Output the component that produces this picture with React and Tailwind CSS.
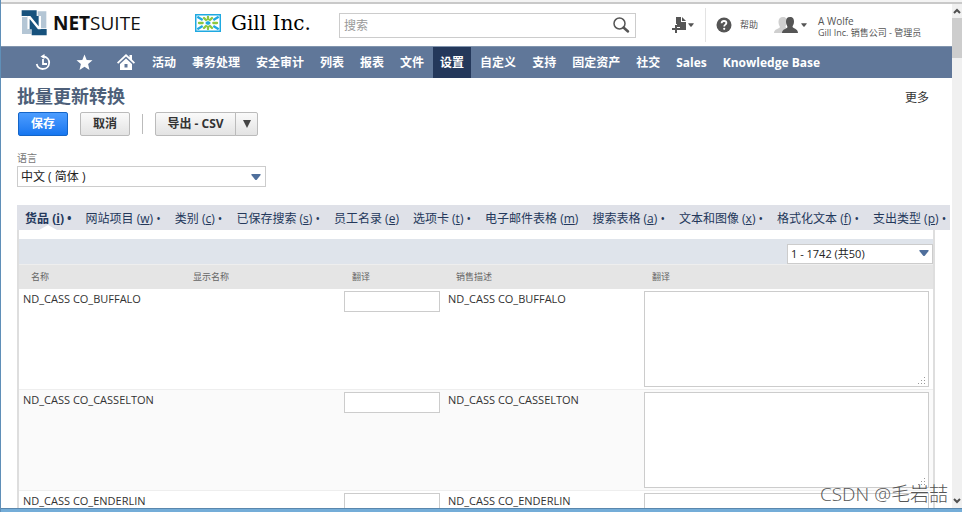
import { useState } from "react";

const navItems = [
  "活动",
  "事务处理",
  "安全审计",
  "列表",
  "报表",
  "文件",
  "设置",
  "自定义",
  "支持",
  "固定资产",
  "社交",
  "Sales",
  "Knowledge Base",
];

const tabs = [
  { label: "货品", hotkey: "i", dot: true },
  { label: "网站项目", hotkey: "w", dot: true },
  { label: "类别", hotkey: "c", dot: true },
  { label: "已保存搜索", hotkey: "s", dot: true },
  { label: "员工名录", hotkey: "e", dot: false },
  { label: "选项卡", hotkey: "t", dot: true },
  { label: "电子邮件表格", hotkey: "m", dot: false },
  { label: "搜索表格", hotkey: "a", dot: true },
  { label: "文本和图像", hotkey: "x", dot: true },
  { label: "格式化文本", hotkey: "f", dot: true },
  { label: "支出类型", hotkey: "p", dot: true },
];

const rows = ["ND_CASS CO_BUFFALO", "ND_CASS CO_CASSELTON", "ND_CASS CO_ENDERLIN"];

function Caret({ className }) {
  return (
    <svg viewBox="0 0 10 6" className={className} fill="currentColor" aria-hidden="true">
      <path d="M1 0h8q1 0 .6 1L6 5.4q-1 1-2 0L.4 1Q0 0 1 0Z" />
    </svg>
  );
}

function NetSuiteLogo() {
  return (
    <a href="#home" aria-label="NetSuite" className="flex items-center">
      <svg viewBox="0 0 78 78" className="h-[26px] w-[26px]">
        <path d="M3 21h16v37h12v14H3Z" fill="#b4c6d5" />
        <path d="M50 4h26v51H60V18H50Z" fill="#b4c6d5" />
        <path d="M2 1h45v17h8v39h22v19H32V58H20V18H2Z" fill="#17527d" />
        <path d="M19 18h9l25 31V18h6v40h-8L26 27v31h-7Z" fill="#fff" />
      </svg>
      <span className="ml-1.5 whitespace-nowrap text-[19px] leading-6 text-[#111]">
        <b>NET</b>SUITE
      </span>
    </a>
  );
}

function GillLogo() {
  return (
    <svg viewBox="0 0 78 54" className="h-[18px] w-[26px] shrink-0">
      <rect x="2" y="2" width="74" height="50" fill="#fff" stroke="#1fa9e1" strokeWidth="5" />
      <g stroke="#1fa9e1" strokeWidth="7">
        <path d="M7 8l16 10M71 8l-16 10M7 46l16-10M71 46l-16-10M32 27h14M39 22v10" />
      </g>
      <g stroke="#8cc63f" strokeWidth="7" strokeLinecap="round">
        <path d="M39 9v7M39 38v7M12 27h11M55 27h11M27 12l6 6M51 12l-6 6M27 42l6-6M51 42l-6-6" />
      </g>
    </svg>
  );
}

function TopHeader() {
  return (
    <header className="flex h-[42px] shrink-0 items-center bg-white pl-5">
      <div className="w-[174px] shrink-0 pb-1">
        <NetSuiteLogo />
      </div>
      <div className="flex w-[144px] shrink-0 items-center pb-1">
        <GillLogo />
        <span className="ml-2.5 whitespace-nowrap font-['DejaVu_Serif',serif] text-[20px] leading-6 text-black">
          Gill Inc.
        </span>
      </div>
      <form className="flex h-[25px] max-w-[297px] flex-1 items-center border border-[#ccc] bg-white">
        <input
          type="search"
          aria-label="搜索"
          placeholder="搜索"
          className="h-full min-w-0 flex-1 px-1 text-xs outline-none placeholder:text-[#999]"
        />
        <button type="button" aria-label="搜索" className="px-[5px]">
          <svg viewBox="0 0 18 18" className="h-[18px] w-[18px]" fill="none" stroke="#555">
            <circle cx="7.5" cy="7.5" r="5.5" strokeWidth="1.5" />
            <path d="M11.5 11.5l4.5 4" strokeWidth="2.5" strokeLinecap="round" />
          </svg>
        </button>
      </form>
      <button type="button" aria-label="新建" className="ml-9 flex items-center text-[#555]">
        <svg viewBox="0 0 16 18" className="h-[18px] w-4" fill="currentColor">
          <path d="M4 1h5v5h5v8H8v-3H5V8H4Z" />
          <path d="M10 1l4 4h-4Z" />
          <path d="M3 9h2v3h3v2H5v3H3v-3H0v-2h3Z" />
        </svg>
        <Caret className="h-1 w-1.5" />
      </button>
      <div className="ml-[11px] h-[34px] border-l border-[#e3e3e3]" />
      <button type="button" className="ml-2.5 flex items-center gap-2 text-[9px] leading-4 text-[#555]">
        <svg viewBox="0 0 16 16" className="h-4 w-4">
          <circle cx="8" cy="8" r="7.5" fill="#555" />
          <path
            d="M5.6 6.2C5.7 4.7 6.6 4 8 4s2.4.8 2.4 2.1C10.4 7.6 8.2 7.7 8.2 9.4"
            fill="none"
            stroke="#fff"
            strokeWidth="1.8"
          />
          <circle cx="8.2" cy="11.8" r="1.1" fill="#fff" />
        </svg>
        帮助
      </button>
      <button type="button" aria-label="角色" className="ml-4 flex items-center gap-[3px] text-[#555]">
        <svg viewBox="0 0 24 18" className="h-[18px] w-6">
          <path
            d="M9 1c3 0 4 2 4 4.500s-1 3.500-1.500 5c0 2 5 2 5 6.500H0c0-4 5-4 6-6C5 9 4.500 8 4.500 5.500S6 1 9 1Z"
            fill="#cfcfcf"
          />
          <path
            d="M16 1c3 0 4 2 4 4.500s-1 3.500-1.500 5c0 2 5.500 2 5.500 6.500H8c0-4 5-4 5.500-6C13 9 12 8 12 5.500S13 1 16 1Z"
            fill="#555"
          />
        </svg>
        <Caret className="h-1 w-1.5" />
      </button>
      <div className="ml-[11px] whitespace-nowrap pt-1 text-[#555]">
        <div className="text-[10px] leading-[11px]">A Wolfe</div>
        <div className="text-[9px] leading-[11px]">Gill Inc. 销售公司 - 管理员</div>
      </div>
    </header>
  );
}

function NavBar() {
  return (
    <nav className="flex h-8 shrink-0 items-stretch gap-0.5 whitespace-nowrap border-t border-[#8295ae] bg-[#607799] pl-[34px] text-xs font-bold text-white">
      <div className="mr-2 flex items-center gap-6">
        <a href="#recent" aria-label="最近记录">
          <svg viewBox="0 0 17 17" className="h-[17px] w-[17px]" fill="none" stroke="#fff" strokeWidth="1.8">
            <path d="M9 2.500a6.300 6.300 0 1 1-7.300 7.500" />
            <path d="M8 5v5h4" />
            <path d="M9.500 0v5L5.500 2.500Z" fill="#fff" stroke="none" />
          </svg>
        </a>
        <a href="#shortcuts" aria-label="快捷方式">
          <svg viewBox="0 0 17 17" className="h-[17px] w-[17px]" fill="#fff">
            <path d="M8.500 .5l2.200 5.400 5.800.4-4.400 3.800 1.400 5.900-5-3.200-5 3.200 1.400-5.900L.5 6.300l5.800-.4Z" />
          </svg>
        </a>
        <a href="#home" aria-label="主页">
          <svg viewBox="0 0 18 17" className="h-[17px] w-[18px]" fill="#fff">
            <path d="M9 0l3.500 3.300V1H15v4.500l3 3-1.200 1.200L9 2.500 1.200 9.700 0 8.500Z" />
            <path d="M9 4.500l6 5.500v6H3v-6Zm-1.500 5.500v3.500h3V10Z" fillRule="evenodd" />
          </svg>
        </a>
      </div>
      {navItems.map((item) => (
        <a
          key={item}
          href="#nav"
          className={`flex items-center px-[7px] ${item === "设置" ? "bg-[#24385b]" : ""}`}
        >
          {item}
        </a>
      ))}
    </nav>
  );
}

function PageTitle() {
  const buttonClass =
    "h-6 border border-[#bbb] bg-linear-to-b from-[#fafafa] to-[#e3e3e3] text-xs font-bold text-[#333]";

  return (
    <div className="px-4 pt-2">
      <div className="flex items-center justify-between pr-[7px]">
        <h1 className="text-[18px] font-bold leading-5 text-[#4d5f79]">批量更新转换</h1>
        <a href="#more" className="pt-1 text-xs leading-4 text-[#333]">
          更多
        </a>
      </div>
      <div className="mt-1.5 flex items-center pl-px">
        <button
          type="button"
          className="h-6 w-[50px] rounded-xs border border-[#1465c8] bg-linear-to-b from-[#4c9dff] to-[#1576f0] text-xs font-bold text-white"
        >
          保存
        </button>
        <button type="button" className={`${buttonClass} ml-3 w-[50px] rounded-xs`}>
          取消
        </button>
        <div className="mx-3 h-5 border-l border-[#bbb]" />
        <button type="button" className={`${buttonClass} w-[81px] rounded-l-xs`}>
          导出 - CSV
        </button>
        <button
          type="button"
          aria-label="更多导出选项"
          className={`${buttonClass} -ml-px flex w-[23px] items-center justify-center rounded-r-xs`}
        >
          <svg viewBox="0 0 8 8" className="h-2 w-2" fill="#444">
            <path d="M0 0h8L4 8Z" />
          </svg>
        </button>
      </div>
      <div className="mt-3.5 w-[249px]">
        <label htmlFor="language" className="block text-[10px] leading-4 text-[#777]">
          语言
        </label>
        <div className="relative">
          <select
            id="language"
            className="block h-[21px] w-full appearance-none border border-[#ccc] bg-white px-[3px] text-xs leading-4 text-[#222] outline-none"
          >
            <option>中文 ( 简体 )</option>
          </select>
          <Caret className="pointer-events-none absolute right-[5px] top-2 h-1.5 w-2.5 text-[#4f6f9c]" />
        </div>
      </div>
    </div>
  );
}

function TabBar({ active, onChange }) {
  return (
    <div role="tablist" className="ml-4 mr-0.5 mt-[18px] flex h-[25px] whitespace-nowrap bg-[#dfe1e8] pl-px text-xs">
      {tabs.map((tab) => (
        <button
          key={tab.hotkey}
          type="button"
          role="tab"
          aria-selected={active === tab.hotkey}
          onClick={() => onChange(tab.hotkey)}
          className={`relative flex items-center px-[7px] pt-0.5 text-[#24385b] ${
            active === tab.hotkey ? "font-bold" : ""
          }`}
        >
          <span>
            {tab.label} (<u>{tab.hotkey}</u>){tab.dot && " •"}
          </span>
          {active === tab.hotkey && (
            <svg viewBox="0 0 18 5" className="absolute bottom-0 left-1/2 h-[5px] w-[18px] -translate-x-1/2">
              <path d="M0 5l9-5 9 5Z" fill="#fff" />
            </svg>
          )}
        </button>
      ))}
    </div>
  );
}

function ItemsTable() {
  return (
    <div className="ml-4 mr-[17px] border-x-2 border-[#dedede] pt-[9px]">
      <div className="flex h-[26px] items-end justify-end border-b border-[#eee] bg-[#dfe4eb]">
        <div className="relative w-[146px]">
          <select
            aria-label="记录范围"
            className="block h-5 w-full appearance-none border border-[#ccc] bg-white px-[3px] text-[11px] leading-4 text-[#222] outline-none"
          >
            <option>1 - 1742 (共50)</option>
          </select>
          <Caret className="pointer-events-none absolute right-1 top-1.5 h-1.5 w-2.5 text-[#4f6f9c]" />
        </div>
      </div>
      <table className="w-full table-fixed border-collapse text-left text-[11px] text-[#333]">
        <thead>
          <tr className="h-6 bg-[#e5e5e5] text-[9px] text-[#666]">
            <th className="w-[162px] px-3 font-normal">名称</th>
            <th className="w-[159px] px-3 font-normal">显示名称</th>
            <th className="w-[104px] px-3 font-normal">翻译</th>
            <th className="w-[196px] px-3 font-normal">销售描述</th>
            <th className="px-3 font-normal">翻译</th>
          </tr>
        </thead>
        <tbody>
          {rows.map((name) => (
            <tr key={name} className="border-b border-[#eee] align-top even:bg-[#fafafa]">
              <td className="whitespace-nowrap px-1 py-0.5 leading-4">{name}</td>
              <td className="px-1 py-0.5" />
              <td className="px-1 py-0.5">
                <input
                  type="text"
                  aria-label={`${name} 显示名称翻译`}
                  className="block h-[21px] w-full border border-[#ccc] bg-white px-1 outline-none"
                />
              </td>
              <td className="whitespace-nowrap px-1 py-0.5 leading-4">{name}</td>
              <td className="px-1 py-0.5">
                <div className="relative">
                  <textarea
                    aria-label={`${name} 销售描述翻译`}
                    className="block h-24 w-full resize-none border border-[#ccc] bg-white px-1 outline-none"
                  />
                  <svg viewBox="0 0 8 8" className="absolute bottom-0.5 right-[3px] h-2 w-2" fill="#999">
                    <path d="M6 0h1v1H6zM6 3h1v1H6zM3 3h1v1H3zM6 6h1v1H6zM3 6h1v1H3zM0 6h1v1H0z" />
                  </svg>
                </div>
              </td>
            </tr>
          ))}
        </tbody>
      </table>
    </div>
  );
}

function ScrollBar() {
  return (
    <div className="flex w-2.5 shrink-0 flex-col items-center bg-[#f0f0f0]">
      <svg viewBox="0 0 8 6" className="my-1 h-1.5 w-2" fill="none" stroke="#505050" strokeWidth="2">
        <path d="M1 5l3-3 3 3" />
      </svg>
      <div className="h-10 w-full bg-[#cdcdcd]" />
      <svg viewBox="0 0 8 6" className="mb-1 mt-auto h-1.5 w-2" fill="none" stroke="#505050" strokeWidth="2">
        <path d="M1 1l3 3 3-3" />
      </svg>
    </div>
  );
}

export default function App() {
  const [activeTab, setActiveTab] = useState("i");

  return (
    <div className="relative flex h-screen flex-col overflow-hidden border-l border-[#5f8fb8] bg-white font-['Open_Sans','Noto_Sans_CJK_SC',sans-serif]">
      <div className="h-1 shrink-0 border-b-2 border-[#c9c9c9] bg-[#f4f4f4]" />
      <div className="flex min-h-0 flex-1">
        <div className="flex min-w-0 flex-1 flex-col overflow-hidden">
          <TopHeader />
          <NavBar />
          <main className="min-h-0 flex-1 overflow-hidden">
            <PageTitle />
            <TabBar active={activeTab} onChange={setActiveTab} />
            <ItemsTable />
          </main>
        </div>
        <ScrollBar />
      </div>
      <div className="h-1 shrink-0 border-t border-[#5a87ad] bg-[#74add8]" />
      <div className="pointer-events-none absolute bottom-1 right-3.5 whitespace-nowrap text-[19px] font-light leading-7 text-[#555]">
        CSDN @毛岩喆
      </div>
    </div>
  );
}
